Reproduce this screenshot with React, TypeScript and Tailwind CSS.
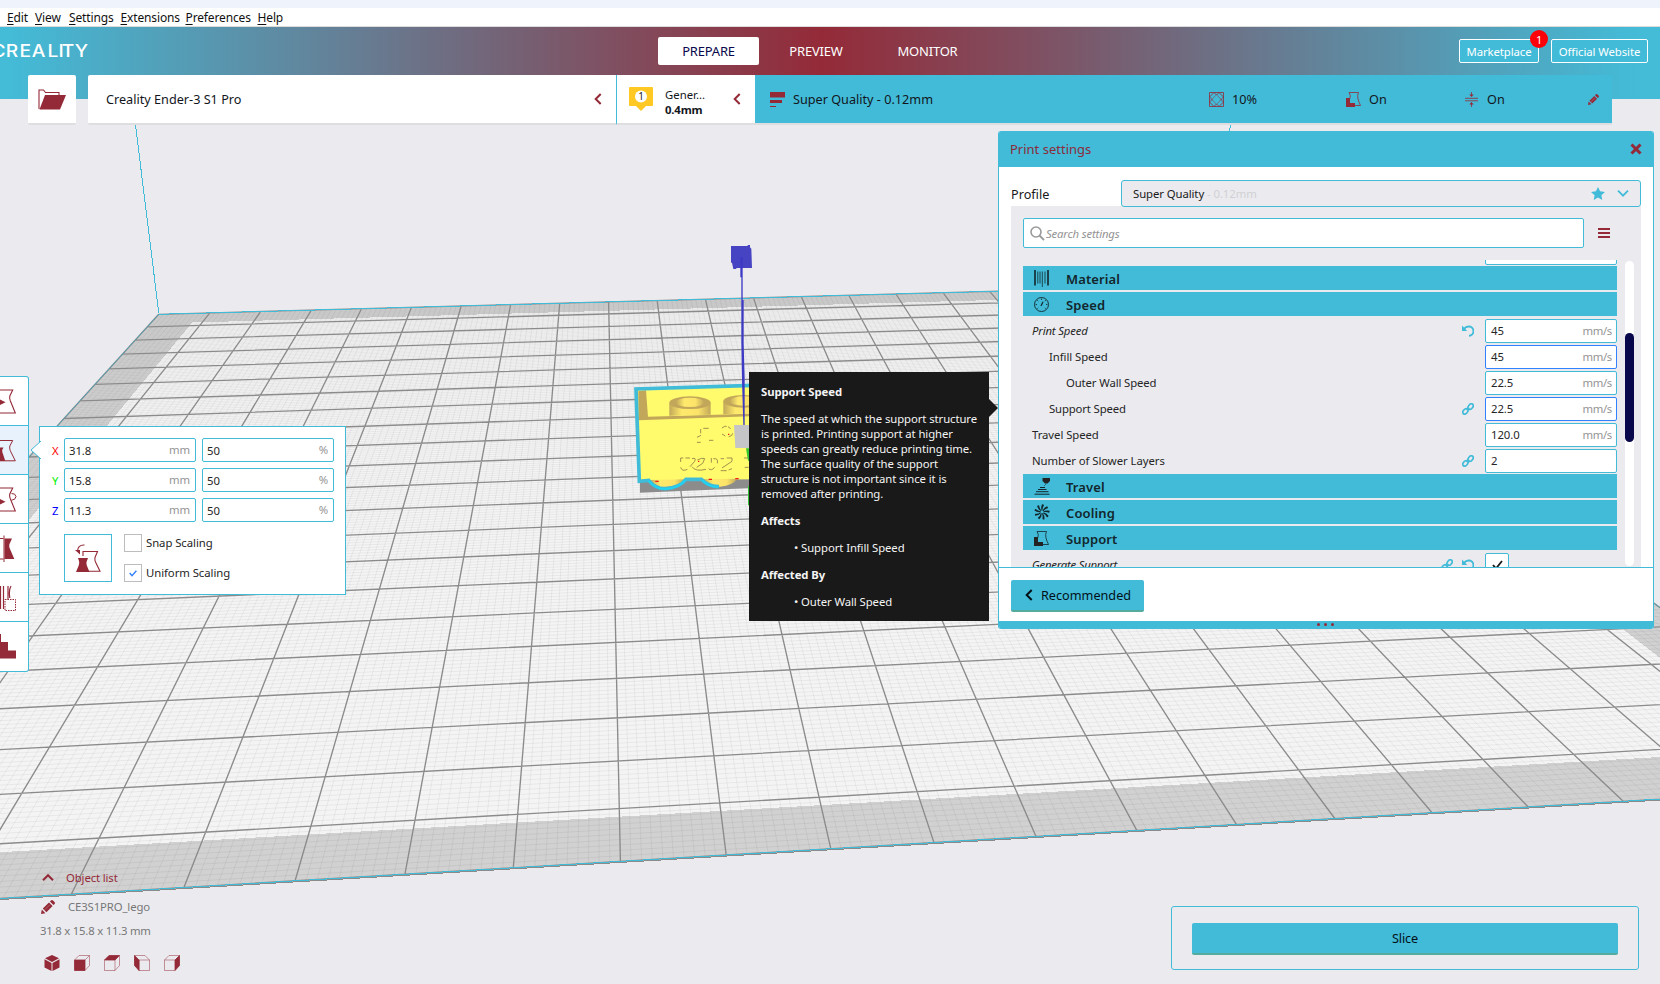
import type { ReactNode } from "react";

type Pt = [number, number];

/* ---------- build plate perspective ---------- */

// Known plate positions (column, row), their place in the viewport (x, y) and a fitting weight.
const ANCHORS: [number, number, number, number, number][] = [
  [0, 0, 159, 313.3, 2],
  [9, 0, 608.6, 301.8, 2],
  [17, 0, 989.6, 292, 2],
  [4, 22, 71.4, 894, 12],
  [9, 22, 620.4, 861.5, 12],
  [14, 22, 1136.8, 830.5, 12],
  [19, 22, 1623.2, 801.1, 12],
  [9, 16, 615.2, 610.2, 3],
  [9, 6, 609.6, 384.3, 1],
  [4, 21, 97.5, 840.2, 3],
];

function solveProjection(): number[] {
  const rows: number[][] = [];
  ANCHORS.forEach(([c, r, x, y, w]) => {
    rows.push([c, r, 1, 0, 0, 0, -c * x, -r * x, x].map((v) => v * w));
    rows.push([0, 0, 0, c, r, 1, -c * y, -r * y, y].map((v) => v * w));
  });
  const m = Array.from({ length: 8 }, (_, i) =>
    Array.from({ length: 9 }, (_, j) => rows.reduce((s, q) => s + q[i] * q[j], 0)),
  );
  for (let i = 0; i < 8; i++) {
    let p = i;
    for (let k = i + 1; k < 8; k++) if (Math.abs(m[k][i]) > Math.abs(m[p][i])) p = k;
    [m[i], m[p]] = [m[p], m[i]];
    for (let k = 0; k < 8; k++) {
      if (k === i) continue;
      const f = m[k][i] / m[i][i];
      for (let j = i; j < 9; j++) m[k][j] -= f * m[i][j];
    }
  }
  return m.map((q, i) => q[8] / q[i]);
}

const H = solveProjection();

function project(c: number, r: number): Pt {
  const w = H[6] * c + H[7] * r + 1;
  return [(H[0] * c + H[1] * r + H[2]) / w, (H[3] * c + H[4] * r + H[5]) / w];
}

const at = (c: number, r: number) => project(c, r).map((v) => v.toFixed(1)).join(" ");
const seg = (c1: number, r1: number, c2: number, r2: number) => `M${at(c1, r1)}L${at(c2, r2)}`;
const quad = (c1: number, r1: number, c2: number, r2: number) =>
  `M${at(c1, r1)}L${at(c2, r1)}L${at(c2, r2)}L${at(c1, r2)}Z`;

const SIZE = 22;
const majorLines = Array.from({ length: SIZE + 1 }, (_, i) => seg(i, 0, i, SIZE) + seg(0, i, SIZE, i)).join("");
const minorLines = Array.from({ length: SIZE * 10 }, (_, i) =>
  i % 10 ? seg(i / 10, 0, i / 10, SIZE) + seg(0, i / 10, SIZE, i / 10) : "",
).join("");

function BuildPlate() {
  return (
    <svg className="absolute inset-0 h-full w-full" viewBox="0 0 1660 984">
      <path d={quad(0, 0, SIZE, SIZE)} fill="#d1d1d1" />
      <path d={quad(0.8, 0.75, SIZE - 0.8, SIZE - 0.84)} fill="#f4f4f4" shapeRendering="crispEdges" />
      <path d={minorLines} stroke="#000" strokeOpacity=".05" strokeWidth="1" fill="none" />
      <path d={majorLines} stroke="#8b8b8b" strokeWidth="1.35" fill="none" />
      <path d={seg(0, SIZE, SIZE, SIZE)} stroke="#8b8b8b" transform="translate(1 1)" fill="none" shapeRendering="crispEdges" />
      <path d={seg(0, SIZE, SIZE, SIZE) + seg(0, 0, SIZE, 0)} stroke="#40bbd8" fill="none" shapeRendering="crispEdges" />
      <path d={seg(0, 0, 0, SIZE) + seg(SIZE, 0, SIZE, SIZE)} stroke="#40a9c4" strokeDasharray="2 1" fill="none" />
      <path d="M135.5 125L158.8 313M1230.5 125L1229.5 132" stroke="#40bbd8" fill="none" shapeRendering="crispEdges" />
      <LegoModel />
    </svg>
  );
}

function LegoModel() {
  return (
    <g transform="translate(600 230) scale(.33333)">
      <linearGradient id="stud">
        <stop offset="0" stopColor="#c2a75a" />
        <stop offset=".3" stopColor="#ffe96b" />
        <stop offset=".7" stopColor="#fbe369" />
        <stop offset="1" stopColor="#c2a75a" />
      </linearGradient>
      <path d="M120 750L460 742V774L120 788Z" fill="#8c8c8c" />
      <path d="M108 478L460 466V748L118 752Z" fill="#fffb6c" />
      <path d="M115 484L138 481L144 561L116 568Z" fill="#c2a75a" />
      <path d="M116 561L450 551V559L116 571Z" fill="#c2a75a" />
      <path d="M208 518V557L332 554V518Z" fill="url(#stud)" />
      <ellipse cx="270" cy="518" rx="62" ry="19" fill="#c2a75a" />
      <ellipse cx="270" cy="517" rx="42" ry="14" fill="url(#stud)" />
      <path d="M370 514V553L492 550V514Z" fill="url(#stud)" />
      <ellipse cx="431" cy="514" rx="61" ry="19" fill="#c2a75a" />
      <ellipse cx="431" cy="513" rx="42" ry="14" fill="url(#stud)" />
      <path d="M150 750Q165 773 195 772Q240 770 255 748Z" fill="url(#stud)" />
      <path d="M308 748Q325 770 360 770Q400 766 411 746Z" fill="url(#stud)" />
      <path d="M460 466L108 477L118 754L146 751Q165 776 195 776Q240 774 258 748L304 748Q326 771 357 770" fill="none" stroke="#40bbd8" strokeWidth="11" />
      <path d="M146 752Q165 776 195 777Q236 775 256 750M306 750Q326 771 355 771" fill="none" stroke="#1ad7f5" strokeWidth="5" />
      <path d="M166 754h10M326 748h10M406 746h10M294 694h4M384 613h4" stroke="#f21a10" strokeWidth="4" />
      <g fill="none" stroke="#8d7b48" strokeWidth="2.5">
        <path d="M302 597V610M310 595H326M291 622L303 616M291 637H302M327 631H340M366 594Q376 586 380 589M384 590L392 596M366 612L376 618M386 620Q398 618 398 610" />
        <path d="M242 696V684H250M256 684H270M276 686Q290 682 284 694L270 710M242 712Q246 726 262 718M276 710Q286 726 318 718M292 690Q306 682 314 686L308 700L290 712M334 684V698M340 686Q356 684 352 700M344 712Q334 724 326 716M362 686H372M380 684H396V694L366 714M362 722H380M386 720L396 716M432 684H446M434 712H446" />
      </g>
      <path d="M402 585H450V654H406Z" fill="#c5c5c8" />
      <path d="M438 655H450V692H444ZM444 768H450V826H444Z" fill="#33c433" />
      <path d="M393 48H442L444 45H450V52L454 56L456 114H410L408 117H400L396 98H393Z" fill="#4744c4" />
      <path d="M421 82H428V210H431V340L434 448V585H430L426 450L424 340V142H421Z" fill="#3d3ac4" />
    </g>
  );
}

/* ---------- icons ---------- */

const RED = "#942937";

function Chevron({ dir, color = RED, size = 12, w = 2 }: { dir: "left" | "down" | "up"; color?: string; size?: number; w?: number }) {
  const d = dir === "left" ? "M8.7 1L3.7 6L8.7 11" : dir === "down" ? "M1 3.7L6 8.7L11 3.7" : "M1 8.2L6 3.2L11 8.2";
  return (
    <svg width={size} height={size} viewBox="0 0 12 12" className="shrink-0">
      <path d={d} fill="none" stroke={color} strokeWidth={w} />
    </svg>
  );
}

function Pencil({ size }: { size: number }) {
  return (
    <svg width={size} height={size} viewBox="0 0 14 14" className="shrink-0">
      <path d="M0 14L.8 9.6L4.4 13.2ZM1.8 8.6L8 2.4L11.6 6L5.4 12.2ZM8.9 1.5L10 .4Q11 -.4 12 .5L13.5 2Q14.4 3 13.6 4L12.5 5.1Z" fill={RED} />
      <path d="M3.8 9.8L9 4.6" stroke="#fff" strokeOpacity=".35" strokeWidth=".8" />
    </svg>
  );
}

function SupportIcon({ color, line = color }: { color: string; line?: string }) {
  return (
    <svg width="15" height="15" viewBox="0 0 15 15" className="shrink-0">
      <path d="M3 .5H12.5Q11 3.5 12 7Q13 10.5 14.5 13.5H9M3 .5Q5 3.5 4 6.5" fill="none" stroke={line} strokeWidth=".8" />
      <path d="M0 6H4V11H9V15H0Z" fill={color} />
    </svg>
  );
}

function InfillIcon() {
  return (
    <svg width="15" height="15" viewBox="0 0 15 15" fill="none" stroke={RED} strokeWidth=".8">
      <path d="M.5 .5H14.5V14.5H.5ZM.5 5L5 .5M.5 10L10 .5M14.5 5L10 .5M14.5 10L5 .5M.5 5L10 14.5M.5 10L5 14.5M14.5 5L5 14.5M14.5 10L10 14.5" />
      <path d="M3.5 7.5L7.5 3L11.5 7.5L7.5 12Z" fill="#42bbd8" stroke="none" />
    </svg>
  );
}

function AdhesionIcon() {
  return (
    <svg width="15" height="15" viewBox="0 0 15 15">
      <path d="M1 6.3H14M1 8.8H14M7.5 0V3M7.5 15V12" stroke={RED} strokeWidth=".8" fill="none" />
      <path d="M5.3 2.4H9.7L7.5 5ZM5.3 12.6H9.7L7.5 10Z" fill={RED} />
    </svg>
  );
}

function UndoIcon() {
  return (
    <svg width="12" height="12" viewBox="0 0 12 12" className="shrink-0">
      <path d="M2 3.8Q4 1.4 6.6 1.5A4.4 4.4 0 0 1 7 10.8" fill="none" stroke="#42bbd8" strokeWidth="1.9" />
      <path d="M0 .4V6H5.2Z" fill="#42bbd8" />
    </svg>
  );
}

function LinkIcon() {
  return (
    <svg width="12" height="12" viewBox="0 0 12 12" fill="none" stroke="#42bbd8" strokeWidth="1.7" className="shrink-0">
      <ellipse cx="3.4" cy="8.4" rx="3.1" ry="2.1" transform="rotate(-50 3.4 8.4)" />
      <ellipse cx="8.6" cy="3.6" rx="3.1" ry="2.1" transform="rotate(-50 8.6 3.6)" />
      <path d="M4.5 6.6L7.5 5.4" />
    </svg>
  );
}

function MaterialIcon() {
  return (
    <svg width="15" height="17" viewBox="0 0 15 17" stroke="#12262c" fill="none">
      <path d="M1 0V15.5M14 0V15.5" strokeWidth="1.6" />
      <path d="M3.8 1.5V13.5M6 1.5V13.5M8.3 1.5V17M11 1.5V13.5" strokeWidth=".8" />
    </svg>
  );
}

function SpeedIcon() {
  return (
    <svg width="15" height="15" viewBox="0 0 15 15" stroke="#12262c" fill="none">
      <circle cx="7.5" cy="7.5" r="7" strokeWidth=".9" />
      <path d="M7.5 1.5V3M3.2 3.2L4.2 4.2M11.8 3.2L10.8 4.2M1.5 7.5H3M12 7.5H13.5M3.4 11.6L4.2 10.8M11.6 11.6L10.8 10.8" strokeWidth=".8" />
      <path d="M7 9L9 4.8" strokeWidth="1.2" />
    </svg>
  );
}

function TravelIcon() {
  return (
    <svg width="16" height="17" viewBox="0 0 16 17">
      <path d="M8.5 0H16V3L13.5 5.5H11L8.5 3Z" fill="#232323" />
      <path d="M10.5 7.5L11.5 6.5M6 9.5H11M4 11.5H12.5M2 13.7H14.5M.5 16.2H15.5" stroke="#12262c" strokeWidth="1" />
    </svg>
  );
}

function CoolingIcon() {
  return (
    <svg width="16" height="16" viewBox="0 0 16 16">
      {[0, 40, 80, 120, 160, 200, 240, 280, 320].map((a) => (
        <path key={a} d="M7.7 6.6Q6.5 3.6 8.1 .3Q10.1 .4 9.9 1.4Q8.2 3.6 8.6 6.6Z" fill="#12262c" transform={`rotate(${a} 8 8)`} />
      ))}
    </svg>
  );
}

function StarIcon() {
  return (
    <svg width="14" height="13" viewBox="0 0 14 13">
      <path d="M7 0L9.1 4.3L14 5L10.4 8.2L11.3 13L7 10.6L2.7 13L3.6 8.2L0 5L4.9 4.3Z" fill="#42bbd8" />
    </svg>
  );
}

/* ---------- header ---------- */

const MENU: [string, string, string][] = [
  ["E", "dit", "w-[28px]"],
  ["V", "iew", "w-[34px]"],
  ["S", "ettings", "w-[51.5px]"],
  ["E", "xtensions", "w-[65px]"],
  ["P", "references", "w-[72px]"],
  ["H", "elp", "w-[30px]"],
];

function MenuBar() {
  return (
    <div className="relative">
      <div className="h-2 bg-[#eff3fb]" />
      <div className="flex h-[19px] items-center whitespace-nowrap border-b border-[#dcdcdc] bg-white pt-0.5 pl-[7px] text-[12px] leading-none tracking-[-0.14px] text-[#111]">
        {MENU.map(([k, rest, w]) => (
          <span key={k + rest} className={w}>
            <span className="underline underline-offset-2">{k}</span>
            {rest}
          </span>
        ))}
      </div>
    </div>
  );
}

function Header() {
  return (
    <div className="relative h-[72px] bg-[linear-gradient(90deg,#44bcd8_0%,#44bad6_1%,#942a38_49.5%,#44bad6_98%,#44bcd8_100%)]">
      <svg className="absolute top-[14px] left-0" width="92" height="20">
        <text x="-7.5 5 17.2 28.2 42 51.8 54.6 66.2" y="15.5" transform="scale(1.13 1)" fill="#fff" className="font-[Inter] text-[17px] font-medium">
          CREALITY
        </text>
      </svg>
      <div className="flex h-[48px] items-center pl-[658px] text-[13px] leading-none tracking-[-0.2px] text-white">
        <div className="mt-[-1px] flex h-7 w-[101px] items-center justify-center rounded-[2px] bg-white pt-0.5 text-[#08074b]">PREPARE</div>
        <div className="w-[114px] text-center">PREVIEW</div>
        <div className="w-[109px] text-center">MONITOR</div>
        <div className="ml-auto flex gap-3 pr-3 text-[11.33px] tracking-[-0.07px]">
          <div className="relative flex h-6 w-[80px] items-center justify-center rounded-[2px] border border-white bg-[#42bbd8] pt-0.5">
            Marketplace
            <span className="absolute -top-[10px] -right-[10px] flex size-[18px] items-center justify-center rounded-full bg-[#fd0008] pt-px text-[11px]">1</span>
          </div>
          <div className="flex h-6 w-[97px] items-center justify-center rounded-[2px] border border-white bg-[#42bbd8] pt-0.5">Official Website</div>
        </div>
      </div>
    </div>
  );
}

function StageBar() {
  return (
    <div className="relative -mt-6 flex h-[50px] pl-7 text-[12.67px] leading-none text-[#12161c]">
      <div className="flex w-12 items-center justify-center rounded-[2px] border-b-2 border-[#dedee1] bg-white">
        <svg width="28" height="21" viewBox="0 0 28 21">
          <path d="M1 20V1H5.5L7.5 3.5H21V7" fill="none" stroke={RED} strokeWidth="1.1" />
          <path d="M7 6H28L22 20.5H1.5Z" fill={RED} />
        </svg>
      </div>
      <div className="ml-3 flex w-[528px] items-center justify-between rounded-l-[2px] border-b-2 border-[#dedee1] bg-white pr-3 pl-[18px]">
        Creality Ender-3 S1 Pro
        <Chevron dir="left" />
      </div>
      <div className="flex w-[139px] items-center border-b-2 border-l border-b-[#dedee1] border-l-[#42bbd8] bg-white pl-3">
        <svg width="24" height="24" viewBox="0 0 24 24" className="shrink-0">
          <path d="M1 0H23Q24 0 24 1V18Q24 19 23 19H17L12 24L7 19H1Q0 19 0 18V1Q0 0 1 0Z" fill="#ffc823" />
          <circle cx="12" cy="9.5" r="6" fill="#fff" />
          <text x="12" y="13" textAnchor="middle" className="font-['Noto_Sans'] text-[10px]" fill="#222">1</text>
        </svg>
        <div className="ml-3 w-[61px] pt-[5px] text-[11.33px] leading-[15px]">
          <div>Gener...</div>
          <div className="font-bold tracking-[-0.15px]">0.4mm</div>
        </div>
        <div className="ml-[5px]"><Chevron dir="left" /></div>
      </div>
      <div className="flex w-[857px] items-center rounded-r-[2px] border-b-2 border-[#dedee1] bg-[#42bbd8] pl-[15px]">
        <svg width="15" height="15" viewBox="0 0 15 15" fill={RED}>
          <path d="M0 0H15V5.5H0ZM0 8H12V11H0ZM0 14H6V15H0Z" />
        </svg>
        <span className="ml-2 w-[416px]">Super Quality - 0.12mm</span>
        <InfillIcon />
        <span className="ml-2 w-[114px]">10%</span>
        <SupportIcon color={RED} />
        <span className="ml-2 w-[95px]">On</span>
        <AdhesionIcon />
        <span className="ml-2 w-[101px]">On</span>
        <Pencil size={11} />
      </div>
    </div>
  );
}

/* ---------- print settings ---------- */

function Heading({ icon, label }: { icon: ReactNode; label: string }) {
  return (
    <div className="mb-0.5 flex h-6 items-center bg-[#42bbd8] text-[13px] font-semibold tracking-[0.12px] text-[#12262c]">
      <span className="flex w-[37px] justify-center">{icon}</span>
      <span className="ml-[6px] pt-0.5">{label}</span>
    </div>
  );
}

function Setting({ label, pad, value, unit, focus, italic, icon }: {
  label: string; pad: string; value: string; unit?: string; focus?: boolean; italic?: boolean; icon?: ReactNode;
}) {
  return (
    <div className="flex h-[26px] items-center">
      <span className={`${pad} ${italic ? "italic" : ""} flex-1`}>{label}</span>
      <span className="mr-[11px] flex">{icon}</span>
      <div className={`flex h-6 w-[132px] items-center justify-between rounded-[2px] border bg-white pr-1 pl-[5px] ${focus ? "border-[#3282ff]" : "border-[#42bbd8]"}`}>
        <span>{value}</span>
        <span className="tracking-[-0.3px] text-[#949494]">{unit}</span>
      </div>
    </div>
  );
}

function PrintSettings() {
  return (
    <div className="absolute top-[131px] left-[998px] flex h-[498px] w-[656px] flex-col overflow-hidden rounded-[3px] border-x border-[#42bbd8] bg-white leading-none">
      <div className="flex h-9 shrink-0 items-center justify-between bg-[#42bbd8] pr-[11px] pl-[11px] text-[13px] text-[#8b2c3c]">
        Print settings
        <svg width="12" height="12" viewBox="0 0 12 12"><path d="M1.5 1.5L10.5 10.5M10.5 1.5L1.5 10.5" stroke={RED} strokeWidth="3" /></svg>
      </div>
      <div className="mx-3 mt-[13px] flex h-[26px] shrink-0 items-center">
        <span className="w-[110px] pt-0.5 text-[12.67px] text-[#191919]">Profile</span>
        <div className="z-10 flex h-[27px] flex-1 items-center rounded-[3px] border border-[#42bbd8] bg-[#ebebef] pr-[11px] pl-[11px] text-[11.33px] tracking-[-0.08px] text-[#191919]">
          <span className="pt-0.5">
            Super Quality<span className="ml-[3px] text-[#d0d0d4]">- 0.12mm</span>
          </span>
          <span className="mr-3 ml-auto"><StarIcon /></span>
          <Chevron dir="down" color="#42bbd8" w={1.8} />
        </div>
      </div>
      <div className="mx-3 flex h-[361px] shrink-0 flex-col bg-[#ebebef] pl-3">
        <div className="mt-3 flex h-[30px] shrink-0 items-center">
          <div className="flex h-[30px] w-[561px] items-center rounded-[2px] border border-[#42bbd8] bg-white pl-[6px] text-[11.33px] tracking-[-0.15px] italic text-[#949494]">
            <svg width="15" height="15" viewBox="0 0 15 15" fill="none" stroke="#9a9a9a" className="mr-px">
              <circle cx="6" cy="6" r="5" strokeWidth="1.6" />
              <path d="M9.5 9.5L14 14" strokeWidth="1.8" />
            </svg>
            <span className="pt-0.5">Search settings</span>
          </div>
          <svg width="12" height="10" className="ml-[14px]" fill={RED}><path d="M0 0H12V2H0ZM0 4H12V6H0ZM0 8H12V10H0Z" /></svg>
        </div>
        <div className="mt-3 flex h-[307px] gap-2 overflow-hidden">
          <div className="w-[594px] text-[11.33px] tracking-[-0.06px] text-[#252525]">
            <div className="-mt-5">
              <Setting label="" pad="" value="" />
            </div>
            <Heading icon={<MaterialIcon />} label="Material" />
            <Heading icon={<SpeedIcon />} label="Speed" />
            <Setting label="Print Speed" pad="pl-[9px] tracking-[-0.15px]" value="45" unit="mm/s" italic icon={<UndoIcon />} />
            <Setting label="Infill Speed" pad="pl-[26px]" value="45" unit="mm/s" focus />
            <Setting label="Outer Wall Speed" pad="pl-[43px] tracking-[-0.12px]" value="22.5" unit="mm/s" />
            <Setting label="Support Speed" pad="pl-[26px] tracking-[-0.14px]" value="22.5" unit="mm/s" focus icon={<LinkIcon />} />
            <Setting label="Travel Speed" pad="pl-[9px]" value="120.0" unit="mm/s" />
            <Setting label="Number of Slower Layers" pad="pl-[9px]" value="2" icon={<LinkIcon />} />
            <Heading icon={<TravelIcon />} label="Travel" />
            <Heading icon={<CoolingIcon />} label="Cooling" />
            <Heading icon={<SupportIcon color="#232323" line="#12262c" />} label="Support" />
            <div className="flex h-[26px] items-center">
              <span className="flex-1 pl-[9px] tracking-[-0.22px] italic">Generate Support</span>
              <LinkIcon />
              <span className="mr-[11px] ml-[9px]"><UndoIcon /></span>
              <div className="mr-[108px] flex size-6 items-center justify-center rounded-[2px] border border-[#42bbd8] bg-white">
                <svg width="11" height="10" viewBox="0 0 11 10"><path d="M1 5L4 8.5L10 1" fill="none" stroke="#191919" strokeWidth="1.8" /></svg>
              </div>
            </div>
          </div>
          <div className="my-px h-[305px] w-[9px] rounded-full bg-white pt-[72px]">
            <div className="h-[109px] rounded-full bg-[#08074b]" />
          </div>
        </div>
      </div>
      <div className="flex h-[54px] shrink-0 items-center border-t border-[#42bbd8] pt-0.5 pl-3">
        <div className="flex h-8 w-[133px] items-center rounded-[2px] border-b-2 border-[#55ab9c] bg-[#42bbd8] pl-3 text-[12.67px] text-[#031018]">
          <span className="mr-[6px]"><Chevron dir="left" color="#031018" /></span>
          <span className="pt-px">Recommended</span>
        </div>
      </div>
      <div className="flex h-2 shrink-0 items-center justify-center gap-1 bg-[#42bbd8] pr-0.5 pb-px">
        <i className="size-[3px] rounded-full bg-[#942937]" />
        <i className="size-[3px] rounded-full bg-[#942937]" />
        <i className="size-[3px] rounded-full bg-[#942937]" />
      </div>
    </div>
  );
}

function Tooltip() {
  return (
    <div className="absolute top-[372px] left-[749px] h-[249px] w-[240px] bg-[#191919] pt-3 pl-3 text-[11.33px] leading-[15px] tracking-[-0.08px] whitespace-nowrap text-[#f4f4f4]">
      <svg className="absolute top-[27px] left-[240px]" width="9" height="18"><path d="M0 0L9 9L0 18Z" fill="#191919" /></svg>
      <p className="font-bold">Support Speed</p>
      <p className="mt-3">
        The speed at which the support structure<br />
        is printed. Printing support at higher<br />
        speeds can greatly reduce printing time.<br />
        The surface quality of the support<br />
        structure is not important since it is<br />
        removed after printing.
      </p>
      <p className="mt-3 font-bold">Affects</p>
      <p className="mt-3 pl-[33px]">• Support Infill Speed</p>
      <p className="mt-3 font-bold">Affected By</p>
      <p className="mt-3 pl-[33px]">• Outer Wall Speed</p>
    </div>
  );
}

/* ---------- left tools ---------- */

const TOOL_ICONS: ReactNode[] = [
  <>
    <path d="M0 13H12.7L9.8 19Q9.3 21 10.2 23.5L15.3 36H0" fill="none" stroke={RED} strokeWidth="1.1" />
    <path d="M0 22.5L5.5 25.2L0 28Z" fill={RED} />
  </>,
  <>
    <path d="M0 14.5H12.7L9.8 20Q9.3 22 10.2 24.5L15.3 34.8H0" fill="none" stroke={RED} strokeWidth="1" />
    <path d="M0 21.5H3.5L2.2 24Q2 26 3 28L5.3 35H0Z" fill={RED} />
  </>,
  <>
    <path d="M0 13H12.7L9.8 19Q9.3 21 10.2 23.5L15.3 36H0" fill="none" stroke={RED} strokeWidth="1.1" />
    <path d="M0 24L5.5 26.8L0 29.5Z" fill={RED} />
    <path d="M11.5 18.5Q15.5 18.3 16 21.5Q15.5 25 11.5 25.2" fill="none" stroke={RED} />
  </>,
  <>
    <path d="M0 14.5H3.5M0 35H3.5M4 11.5V38" fill="none" stroke={RED} />
    <path d="M4.5 14.5H12L9.3 20.5Q9 22.5 9.8 24.5L14.3 35H4.5Z" fill={RED} />
  </>,
  <>
    <path d="M.5 13V36M3.5 13V36M8 13V34M11 13Q8.5 17 9.8 25" fill="none" stroke={RED} strokeWidth="1.2" />
    <rect x="5" y="26.5" width="10.5" height="11" fill="#fff" stroke={RED} strokeDasharray="1.5 1" />
  </>,
  <path d="M0 12H1V20H8V28.5H16V36.5H0Z" fill={RED} />,
];

function Toolbar() {
  return (
    <div className="absolute top-[376px] left-0 w-[29px] divide-y divide-[#42bbd8] overflow-hidden rounded-r-[3px] border border-l-0 border-[#42bbd8] bg-white">
      {TOOL_ICONS.map((icon, i) => (
        <div key={i} className={i === 1 ? "h-[49px] bg-[#e8f2fc]" : "h-[49px]"}>
          <svg width="28" height="48">{icon}</svg>
        </div>
      ))}
    </div>
  );
}

const AXES: [string, string, string][] = [
  ["X", "31.8", "text-[#ff0000]"],
  ["Y", "15.8", "text-[#00f000]"],
  ["Z", "11.3", "text-[#0000ff]"],
];

function Field({ value, unit }: { value: string; unit: string }) {
  return (
    <div className="flex h-6 w-[132px] items-center justify-between rounded-[2px] border border-[#42bbd8] bg-white pr-[5px] pl-1">
      <span className="pt-0.5">{value}</span>
      <span className="text-[#949494]">{unit}</span>
    </div>
  );
}

function CheckRow({ label, checked }: { label: string; checked?: boolean }) {
  return (
    <div className="flex h-[18px] items-center">
      <span className="mr-1 flex size-[18px] items-center justify-center border border-[#bdbdbd] bg-white">
        {checked && <svg width="8" height="7" viewBox="0 0 8 7"><path d="M.7 3L3 5.7L7.4 .8" fill="none" stroke="#3282ff" strokeWidth="1.4" /></svg>}
      </span>
      {label}
    </div>
  );
}

function ScalePanel() {
  return (
    <div className="absolute top-[426px] left-[39px] h-[169px] w-[307px] border border-[#42bbd8] bg-white pt-[11px] pl-3 text-[11.33px] leading-none tracking-[-0.06px] text-[#252525]">
      <svg className="absolute top-[13px] -left-[10px]" width="11" height="20">
        <path d="M11 1L1 10L11 19" fill="#fff" stroke="#42bbd8" />
      </svg>
      <div className="flex flex-col gap-1.5">
        {AXES.map(([axis, size, color]) => (
          <div key={axis} className="flex items-center gap-1.5">
            <span className={`${color} w-1.5 pt-0.5`}>{axis}</span>
            <Field value={size} unit="mm" />
            <Field value="50" unit="%" />
          </div>
        ))}
      </div>
      <div className="mt-3 ml-3 flex gap-3">
        <div className="flex size-12 items-center justify-center border border-[#42bbd8]">
          <svg width="26" height="28" viewBox="0 0 26 28">
            <path d="M9.5 1Q3 .5 2.5 7" fill="none" stroke={RED} strokeWidth="1.1" />
            <path d="M0 6H5V10.5Z" fill={RED} />
            <path d="M8 12V7.5H22.5L20 13.5Q19.5 16 20.5 18L25 27.3H14" fill="none" stroke={RED} strokeWidth="1.1" />
            <path d="M3 14H13L11.5 18Q11.2 20 12 22L14.5 28H1L3.7 21.5Q4.7 19 4 17Z" fill={RED} />
          </svg>
        </div>
        <div className="flex flex-col gap-3">
          <CheckRow label="Snap Scaling" />
          <CheckRow label="Uniform Scaling" checked />
        </div>
      </div>
    </div>
  );
}

/* ---------- bottom ---------- */

const FACE = { fill: RED, stroke: RED, strokeWidth: 0.8 };
const VIEWS: ReactNode[] = [
  <>
    <path d="M8 0L15 3.2L8 7L1 3.2ZM.5 4.3L7.5 8V16L.5 12.5ZM15.5 4.3L8.5 8V16L15.5 12.5Z" fill={RED} />
  </>,
  <>
    <path d="M.5 5L5 .5H15.5V10.5L11 15.5M11 5L15.5 .5" fill="none" stroke={RED} strokeOpacity=".6" strokeWidth=".8" />
    <path d="M.5 5H11V15.5H.5Z" {...FACE} />
  </>,
  <>
    <path d="M.5 5V15.5H11V5M11 15.5L15.5 10.5V.5" fill="none" stroke={RED} strokeOpacity=".6" strokeWidth=".8" />
    <path d="M.5 5L5 .5H15.5L11 5Z" {...FACE} />
  </>,
  <>
    <path d="M.5 .5H11L15.5 5V15.5H5V5H15.5" fill="none" stroke={RED} strokeOpacity=".6" strokeWidth=".8" />
    <path d="M.5 .5L5 5V15.5L.5 10.5Z" {...FACE} />
  </>,
  <>
    <path d="M11 5H.5V15.5H11M.5 5L5 .5H15.5" fill="none" stroke={RED} strokeOpacity=".6" strokeWidth=".8" />
    <path d="M11 5L15.5 .5V10.5L11 15.5Z" {...FACE} />
  </>,
];

function ObjectInfo() {
  return (
    <div className="absolute top-[870px] left-10 text-[11.33px] leading-none tracking-[-0.12px] text-[#777]">
      <div className="flex h-4 items-center pl-0.5 text-[#942937]">
        <Chevron dir="up" />
        <span className="ml-3">Object list</span>
      </div>
      <div className="mt-[13px] flex h-4 items-center pl-px">
        <Pencil size={14} />
        <span className="ml-[13px]">CE3S1PRO_lego</span>
      </div>
      <div className="mt-2 flex h-4 items-center tracking-[-0.22px]">31.8 x 15.8 x 11.3 mm</div>
      <div className="mt-4 flex gap-[14px] pl-1">
        {VIEWS.map((v, i) => (
          <svg key={i} width="16" height="16" viewBox="0 0 16 16">{v}</svg>
        ))}
      </div>
    </div>
  );
}

function SliceBox() {
  return (
    <div className="absolute top-[906px] left-[1171px] h-16 w-[468px] rounded-[3px] border border-[#42bbd8] px-5 pt-4">
      <div className="flex h-8 items-center justify-center rounded-[2px] border-b-2 border-[#55ab9c] bg-[#42bbd8] text-[12.67px] leading-none tracking-[-0.15px] text-[#031018]">Slice</div>
    </div>
  );
}

export default function App() {
  return (
    <div className="relative h-[984px] w-[1660px] overflow-hidden bg-[#ebebef] font-['Noto_Sans',sans-serif]">
      <BuildPlate />
      <MenuBar />
      <Header />
      <StageBar />
      <PrintSettings />
      <Tooltip />
      <Toolbar />
      <ScalePanel />
      <ObjectInfo />
      <SliceBox />
    </div>
  );
}
